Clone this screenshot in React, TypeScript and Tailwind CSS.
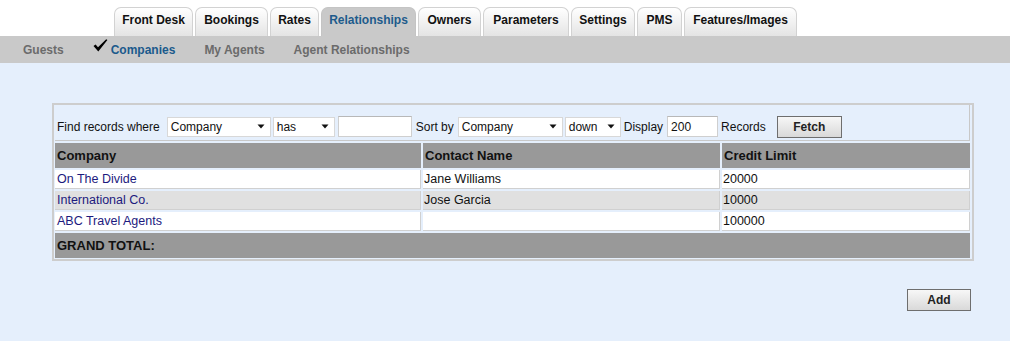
import React from "react";

const tabs = [
  { label: "Front Desk", w: 79 },
  { label: "Bookings", w: 73 },
  { label: "Rates", w: 49 },
  { label: "Relationships", w: 95, active: true },
  { label: "Owners", w: 63 },
  { label: "Parameters", w: 86 },
  { label: "Settings", w: 64 },
  { label: "PMS", w: 45 },
  { label: "Features/Images", w: 113 },
];

function Arrow() {
  return (
    <svg width="8" height="5" viewBox="0 0 8 5" className="shrink-0">
      <polygon points="0.5,0.5 7.5,0.5 4,4.5" fill="#111" />
    </svg>
  );
}

function FakeSelect({ label, w }: { label: string; w: number }) {
  return (
    <div
      className="flex h-[20px] items-center justify-between border border-[#d8d8d8] bg-white pl-[3px] pr-[5px]"
      style={{ width: w }}
    >
      <span className="leading-[16px]">{label}</span>
      <Arrow />
    </div>
  );
}

function FakeInput({ value, w }: { value?: string; w: number }) {
  return (
    <div
      className="flex h-[21px] items-center border border-[#cfcfcf] border-t-[#b8b8b8] bg-white pl-[3px]"
      style={{ width: w }}
    >
      <span className="leading-[16px]">{value}</span>
    </div>
  );
}

function Check() {
  return (
    <svg width="15" height="13" viewBox="0 0 15 13" className="shrink-0 -mt-[3px]">
      <path d="M0.5 7 L2.6 5.4 L5 8.2 L13.2 0.3 L14.4 1 L5.3 12.6 Z" fill="#000" />
    </svg>
  );
}

const rows = [
  { company: "On The Divide", contact: "Jane Williams", limit: "20000", bg: "bg-white" },
  { company: "International Co.", contact: "Jose Garcia", limit: "10000", bg: "bg-[#e0e0e0]" },
  { company: "ABC Travel Agents", contact: "", limit: "100000", bg: "bg-white" },
];

export default function App() {
  return (
    <div
      className="min-h-[341px] w-[1010px] bg-[#e5effc] text-[12px] text-[#111]"
      style={{ fontFamily: '"Liberation Sans", Arial, sans-serif' }}
    >
      {/* Tabs */}
      <div className="flex h-[36px] items-end gap-[2px] bg-white pl-[114px]">
        {tabs.map((t) => (
          <div
            key={t.label}
            className={
              "flex h-[29px] justify-center rounded-t-[7px] pt-[4px] font-bold leading-[16px] " +
              (t.active
                ? "border border-b-0 border-[#c4c4c4] bg-[#c9c9c9] text-[#1d5b8c]"
                : "border border-b-0 border-[#d2d2d2] bg-gradient-to-b from-white to-[#e4e4e4] text-[#111]")
            }
            style={{ width: t.w }}
          >
            {t.label}
          </div>
        ))}
      </div>

      {/* Sub nav */}
      <div className="flex h-[27px] items-start gap-[29px] bg-[#c9c9c9] pl-[23px] pt-[6px] font-bold leading-[16px] text-[#6b6b6b]">
        <span>Guests</span>
        <span className="flex items-start gap-[3px] text-[#1b5a8c]">
          <Check />
          Companies
        </span>
        <span>My Agents</span>
        <span>Agent Relationships</span>
      </div>

      {/* Main box */}
      <div className="ml-[52px] w-[922px] pt-[40px]">
        <div className="border-2 border-[#cdcdcd] pb-[1px] pl-[1px] pr-[2px]">
          <div className="grid grid-cols-[366px_297px_248px] gap-[2px]">
            <div className="col-span-3 flex h-[36px] items-center border-b border-r border-[#c8c8c8] pl-[2px] pt-[8px]">
              <span className="mr-[7px] leading-[16px]">Find records where</span>
              <FakeSelect label="Company" w={104} />
              <div className="w-[2px]" />
              <FakeSelect label="has" w={62} />
              <div className="w-[3px]" />
              <FakeInput w={74} />
              <span className="ml-[4px] mr-[4px] leading-[16px]">Sort by</span>
              <FakeSelect label="Company" w={105} />
              <div className="w-[2px]" />
              <FakeSelect label="down" w={56} />
              <span className="ml-[3px] mr-[4px] leading-[16px]">Display</span>
              <FakeInput value="200" w={51} />
              <span className="ml-[3px] leading-[16px]">Records</span>
              <button className="ml-[11px] h-[22px] w-[65px] border border-[#6e6e6e] bg-gradient-to-b from-[#f7f7f7] to-[#d9d9d9] text-[12px] font-bold leading-[16px] text-[#222]">
                Fetch
              </button>
            </div>

            {["Company", "Contact Name", "Credit Limit"].map((h) => (
              <div
                key={h}
                className="flex h-[25px] items-center bg-[#999999] pl-[2px] text-[13px] font-bold text-[#111]"
              >
                {h}
              </div>
            ))}

            {rows.map((r) => (
              <React.Fragment key={r.company}>
                <div className={"flex h-[19px] items-center border-b border-r border-[#d0d0d0] pl-[2px] text-[12.5px] text-[#1c1a7e] " + r.bg}>
                  {r.company}
                </div>
                <div className={"flex h-[19px] items-center border-b border-r border-[#d0d0d0] pl-[1px] text-[12.5px] " + r.bg}>
                  {r.contact}
                </div>
                <div className={"flex h-[19px] items-center border-b border-r border-[#d0d0d0] pl-[1px] text-[12.5px] " + r.bg}>
                  {r.limit}
                </div>
              </React.Fragment>
            ))}

            <div className="col-span-3 flex h-[25px] items-center bg-[#999999] pl-[2px] text-[13px] font-bold text-[#111]">
              GRAND TOTAL:
            </div>
          </div>
        </div>

        <div className="mt-[28px] flex justify-end pr-[3px]">
          <button className="h-[22px] w-[64px] border border-[#6e6e6e] bg-gradient-to-b from-[#f7f7f7] to-[#d9d9d9] text-[12px] font-bold leading-[16px] text-[#222]">
            Add
          </button>
        </div>
      </div>
    </div>
  );
}
